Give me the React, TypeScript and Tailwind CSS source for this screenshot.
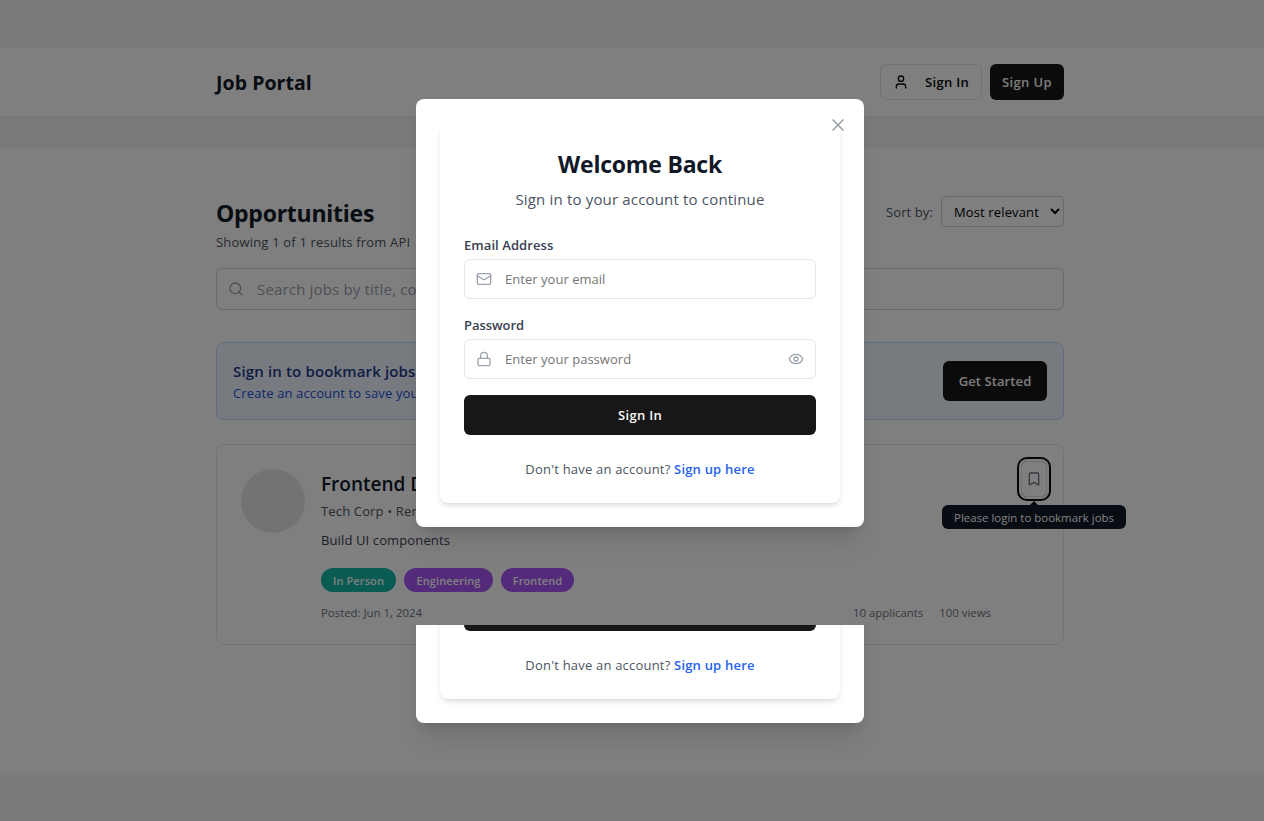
import React from "react";
import { Bookmark, Eye, Search } from "lucide-react";

const fontStack = "font-['Open_Sans','Noto_Sans',sans-serif]";

function UserIcon() {
  return (
    <svg width="16" height="16" viewBox="0 0 24 24" fill="none" stroke="currentColor" strokeWidth="2" strokeLinecap="round" strokeLinejoin="round">
      <path d="M19 21v-2a4 4 0 0 0-4-4H9a4 4 0 0 0-4 4v2" />
      <circle cx="12" cy="7" r="4" />
    </svg>
  );
}

function MailIcon() {
  return (
    <svg width="16" height="16" viewBox="0 0 24 24" fill="none" stroke="currentColor" strokeWidth="2" strokeLinecap="round" strokeLinejoin="round">
      <rect width="20" height="16" x="2" y="4" rx="2" />
      <path d="m22 7-8.97 5.7a1.94 1.94 0 0 1-2.06 0L2 7" />
    </svg>
  );
}

function LockIcon() {
  return (
    <svg width="16" height="16" viewBox="0 0 24 24" fill="none" stroke="currentColor" strokeWidth="2" strokeLinecap="round" strokeLinejoin="round">
      <rect width="18" height="11" x="3" y="11" rx="2" ry="2" />
      <path d="M7 11V7a5 5 0 0 1 10 0v4" />
    </svg>
  );
}

function CloseIcon() {
  return (
    <svg width="20" height="20" viewBox="0 0 24 24" fill="none" stroke="currentColor" strokeWidth="2" strokeLinecap="round" strokeLinejoin="round">
      <path d="M18 6 6 18" />
      <path d="m6 6 12 12" />
    </svg>
  );
}

function SignInModal() {
  return (
    <div className="relative h-[428px] w-[448px] shrink-0 rounded-lg bg-white p-6 shadow-xl">
      <button className="absolute top-4 right-4 z-10 text-[#9ca3af]">
        <CloseIcon />
      </button>
      <div className="flex h-[380px] flex-col rounded-lg bg-white p-6 shadow-[0_4px_6px_-1px_rgba(0,0,0,0.1),0_2px_4px_-2px_rgba(0,0,0,0.1)]">
        <h2 className="text-center text-[23px] leading-[34px] font-bold tracking-[-0.2px] whitespace-nowrap text-[#111827]">Welcome Back</h2>
        <p className="mt-[6px] text-center text-[15px] leading-6 tracking-[0.17px] whitespace-nowrap text-[#4b5563]">Sign in to your account to continue</p>
        <label className="mt-6 text-[13px] leading-5 font-semibold tracking-[0.07px] text-[#374151]">Email Address</label>
        <div className="mt-1 flex h-10 shrink-0 items-center rounded-md border border-[#e5e5e5] px-[11px] text-[#9ca3af]">
          <MailIcon />
          <input className="ml-[13px] min-w-0 flex-1 pt-px text-[13px] tracking-[0.03px] outline-none placeholder:text-[#757575]" placeholder="Enter your email" />
        </div>
        <label className="mt-4 text-[13px] leading-5 font-semibold tracking-[-0.05px] text-[#374151]">Password</label>
        <div className="mt-1 flex h-10 shrink-0 items-center rounded-md border border-[#e5e5e5] px-[11px] text-[#9ca3af]">
          <LockIcon />
          <input className="ml-[13px] min-w-0 flex-1 pt-px text-[13px] tracking-[0.03px] outline-none placeholder:text-[#757575]" placeholder="Enter your password" />
          <Eye size={16} />
        </div>
        <button className="mt-4 h-10 shrink-0 rounded-md bg-[#171717] pt-px text-[13px] font-semibold tracking-[0.3px] text-[#fafafa]">Sign In</button>
        <p className="mt-6 text-center text-[13px] leading-5 tracking-[0.2px] whitespace-nowrap text-[#4b5563]">
          Don't have an account? <span className="font-semibold text-[#2563eb]">Sign up here</span>
        </p>
      </div>
    </div>
  );
}

function Header() {
  return (
    <header className="flex h-[68px] items-center justify-between bg-white pr-[200px] pl-[216px] shadow-[0_1px_2px_rgba(0,0,0,0.05)]">
      <h1 className="pt-[2px] text-[19.5px] leading-7 font-bold tracking-[0.05px] text-[#111827]">Job Portal</h1>
      <div className="flex gap-2">
        <button className="flex h-9 w-[102px] items-center justify-between rounded-md border border-[#e5e5e5] pr-3 pl-3 text-[13px] font-semibold tracking-[0.3px] text-[#0a0a0a]">
          <UserIcon />
          <span className="pt-px">Sign In</span>
        </button>
        <button className="h-9 w-[74px] rounded-md bg-[#171717] pt-px text-[13px] font-semibold tracking-[0.4px] whitespace-nowrap text-[#fafafa]">Sign Up</button>
      </div>
    </header>
  );
}

function JobCard() {
  return (
    <article className="mt-6 flex h-[201px] rounded-lg border border-[#e5e7eb] bg-white pt-6 pr-4 pl-6">
      <div className="flex size-16 shrink-0 items-center justify-center rounded-full bg-[#e6e6e6]">
        <div className="flex size-3 items-center justify-center rounded-full border border-[#ebebeb]">
          <div className="size-1 rounded-full border border-white bg-[#d4d4d4]" />
        </div>
      </div>
      <div className="ml-4 w-[670px] shrink-0">
        <h3 className="pt-px text-[19px] leading-7 font-semibold text-[#111827]">Frontend Developer</h3>
        <p className="mt-[3px] text-[13px] leading-5 tracking-[0.15px] text-[#4b5563]">Tech Corp • Remote</p>
        <p className="mt-[9px] text-[13px] leading-5 tracking-[0.12px] text-[#374151]">Build UI components</p>
        <div className="mt-[18px] flex h-6 gap-2 text-center text-[11px] leading-[26px] font-semibold tracking-[0.1px] text-white">
          <span className="w-[75px] rounded-full bg-[#14b8a6]">In Person</span>
          <span className="w-[89px] rounded-full bg-[#a855f7]">Engineering</span>
          <span className="w-[73px] rounded-full bg-[#a855f7]">Frontend</span>
        </div>
        <div className="mt-[13px] flex gap-4 text-[11.4px] leading-4 text-[#6b7280]">
          <span className="mr-auto">Posted: Jun 1, 2024</span>
          <span>10 applicants</span>
          <span>100 views</span>
        </div>
      </div>
      <div className="relative -mt-2 ml-[30px]">
        <button className="flex h-9 w-[26px] items-center justify-center rounded-md border border-[#e5e5e5] text-[#6b7280] ring-2 ring-[#0a0a0a] ring-offset-2">
          <Bookmark size={16} className="shrink-0" />
        </button>
        <div className="absolute top-11 left-1/2 h-6 w-[184px] -translate-x-1/2 rounded-md bg-[#111827] text-center text-[11.4px] leading-[26px] tracking-[0.03px] whitespace-nowrap text-white">
          <div className="absolute -top-1 left-1/2 -translate-x-1/2 border-x-4 border-b-4 border-x-transparent border-b-[#111827]" />
          Please login to bookmark jobs
        </div>
      </div>
    </article>
  );
}

function Opportunities() {
  return (
    <main className="mt-8 h-[625px] bg-white pt-12 pr-[200px] pl-[216px]">
      <div className="flex h-14 justify-between">
        <div>
          <h2 className="mt-px text-[23px] leading-8 font-bold tracking-[-0.25px] text-[#111827]">Opportunities</h2>
          <p className="mt-[3px] text-[13px] leading-5 tracking-[0.18px] text-[#4b5563]">Showing 1 of 1 results from API</p>
        </div>
        <div className="flex h-[31px] items-center gap-2 text-[13px]">
          <span className="pt-[2px] tracking-[0.1px] text-[#4b5563]">Sort by:</span>
          <select className="h-[31px] w-[123px] rounded border border-[#d1d5db] bg-white pt-px pl-2 text-[13px] tracking-[0.13px] text-black">
            <option>Most relevant</option>
          </select>
        </div>
      </div>
      <div className="mt-4 flex h-[42px] items-center rounded-md border border-[#d1d5db] pl-[11px] text-[#9ca3af]">
        <Search size={16} />
        <input className="ml-[13px] w-[500px] text-[15px] tracking-[0.17px] outline-none placeholder:text-[#9ca3af]" placeholder="Search jobs by title, company, or skills" />
      </div>
      <section className="mt-8 flex h-[78px] items-center justify-between rounded-lg border border-[#bfdbfe] bg-[#eff6ff] px-4">
        <div>
          <h3 className="text-[15px] leading-6 font-semibold tracking-[0.15px] text-[#1e3a8a]">Sign in to bookmark jobs</h3>
          <p className="text-[13px] leading-5 tracking-[0.12px] text-[#1d4ed8]">Create an account to save your favorite jobs</p>
        </div>
        <button className="h-10 w-[104px] rounded-md bg-[#171717] pt-px text-[13px] font-semibold tracking-[0.1px] whitespace-nowrap text-[#fafafa]">Get Started</button>
      </section>
      <JobCard />
    </main>
  );
}

export default function App() {
  return (
    <div className={`${fontStack} relative h-[821px] w-[1264px] overflow-hidden bg-[#f3f4f6] pt-12`}>
      <Header />
      <Opportunities />
      <div className="absolute inset-0 flex flex-col bg-black/50">
        <div className="flex h-[625px] shrink-0 items-end justify-center overflow-hidden pb-[98px] pl-4">
          <SignInModal />
        </div>
        <div className="flex h-[196px] shrink-0 items-end justify-center overflow-hidden pb-[98px] pl-4">
          <SignInModal />
        </div>
      </div>
    </div>
  );
}
